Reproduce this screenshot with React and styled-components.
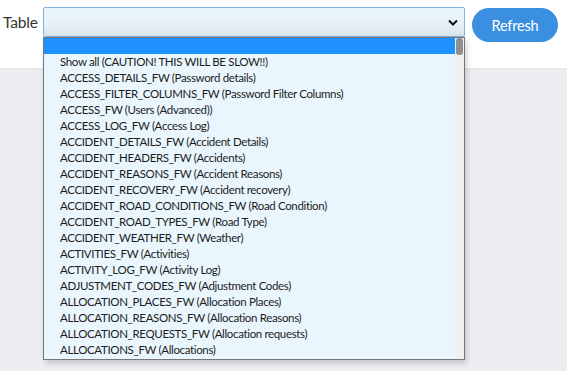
import React from 'react';
import styled, { createGlobalStyle } from 'styled-components';

const GlobalStyle = createGlobalStyle`
	html, body {
		margin: 0;
		padding: 0;
		background: #eeedf2;
		font-family: 'Source Sans Pro', Lato, 'Liberation Sans', sans-serif;
	}
`;

const Page = styled.div`
	width: 567px;
	height: 371px;
	overflow: hidden;
	background: #eeedf2;
`;

const Header = styled.header`
	height: 68px;
	background: #fff;
	display: flex;
	align-items: flex-start;
	padding: 7px 0 0 3px;
	box-sizing: border-box;
	box-shadow: 0 1px 2px rgba(0, 0, 0, 0.04);
`;

const Label = styled.label`
	width: 40px;
	font-size: 15.5px;
	letter-spacing: -0.2px;
	color: #333;
	line-height: 30px;
`;

const SelectWrap = styled.div`
	position: relative;
	width: 422px;
`;

const Select = styled.div`
	height: 30px;
	box-sizing: border-box;
	border: 1px solid #7fb2e0;
	border-radius: 2px;
	background: linear-gradient(to bottom, #eaf6fd 0%, #e6f1f7 60%, #d9e4ea 100%);
	display: flex;
	align-items: center;
	justify-content: flex-end;
	padding-right: 6px;
`;

const Dropdown = styled.ul`
	position: absolute;
	top: 30px;
	left: 0;
	width: 422px;
	height: 323px;
	box-sizing: border-box;
	margin: 0;
	padding: 0;
	list-style: none;
	background: #eaf6fd;
	border: 1px solid #767676;
	box-shadow: 2px 3px 6px rgba(0, 0, 0, 0.18);
	overflow: hidden;
	font-size: 11.5px;
	letter-spacing: -0.35px;
`;

const Option = styled.li`
	height: 16px;
	line-height: 16px;
	padding-left: 16px;
	white-space: nowrap;
	background: ${(p) => (p.selected ? '#1e90ff' : 'transparent')};
	color: ${(p) => (p.selected ? '#fff' : '#1c1c1c')};
`;

const Track = styled.div`
	position: absolute;
	top: 0;
	right: 0;
	width: 9px;
	height: 100%;
	background: #f0f0f0;
`;

const Thumb = styled.div`
	margin: 0 auto;
	width: 7px;
	height: 17px;
	border-radius: 3px;
	background: #8f8f8f;
`;

const Button = styled.button`
	margin-left: 7px;
	margin-top: 1px;
	width: 86px;
	height: 34px;
	border: 0;
	border-radius: 17px;
	background: #3a8fe0;
	color: #fff;
	font-family: inherit;
	font-size: 14.5px;
	letter-spacing: -0.2px;
	cursor: pointer;
`;

const options = [
	'',
	'Show all (CAUTION! THIS WILL BE SLOW!!)',
	'ACCESS_DETAILS_FW (Password details)',
	'ACCESS_FILTER_COLUMNS_FW (Password Filter Columns)',
	'ACCESS_FW (Users (Advanced))',
	'ACCESS_LOG_FW (Access Log)',
	'ACCIDENT_DETAILS_FW (Accident Details)',
	'ACCIDENT_HEADERS_FW (Accidents)',
	'ACCIDENT_REASONS_FW (Accident Reasons)',
	'ACCIDENT_RECOVERY_FW (Accident recovery)',
	'ACCIDENT_ROAD_CONDITIONS_FW (Road Condition)',
	'ACCIDENT_ROAD_TYPES_FW (Road Type)',
	'ACCIDENT_WEATHER_FW (Weather)',
	'ACTIVITIES_FW (Activities)',
	'ACTIVITY_LOG_FW (Activity Log)',
	'ADJUSTMENT_CODES_FW (Adjustment Codes)',
	'ALLOCATION_PLACES_FW (Allocation Places)',
	'ALLOCATION_REASONS_FW (Allocation Reasons)',
	'ALLOCATION_REQUESTS_FW (Allocation requests)',
	'ALLOCATIONS_FW (Allocations)',
];

export default function App() {
	return (
		<Page>
			<GlobalStyle />
			<Header>
				<Label>Table</Label>
				<SelectWrap>
					<Select>
						<svg width='10' height='7' viewBox='0 0 10 7'>
							<path d='M1 1.5 L5 5.5 L9 1.5' fill='none' stroke='#111' strokeWidth='2' />
						</svg>
					</Select>
					<Dropdown>
						{options.map((o, i) => (
							<Option key={i} selected={i === 0}>
								{o}
							</Option>
						))}
						<Track>
							<Thumb />
						</Track>
					</Dropdown>
				</SelectWrap>
				<Button>Refresh</Button>
			</Header>
		</Page>
	);
}
